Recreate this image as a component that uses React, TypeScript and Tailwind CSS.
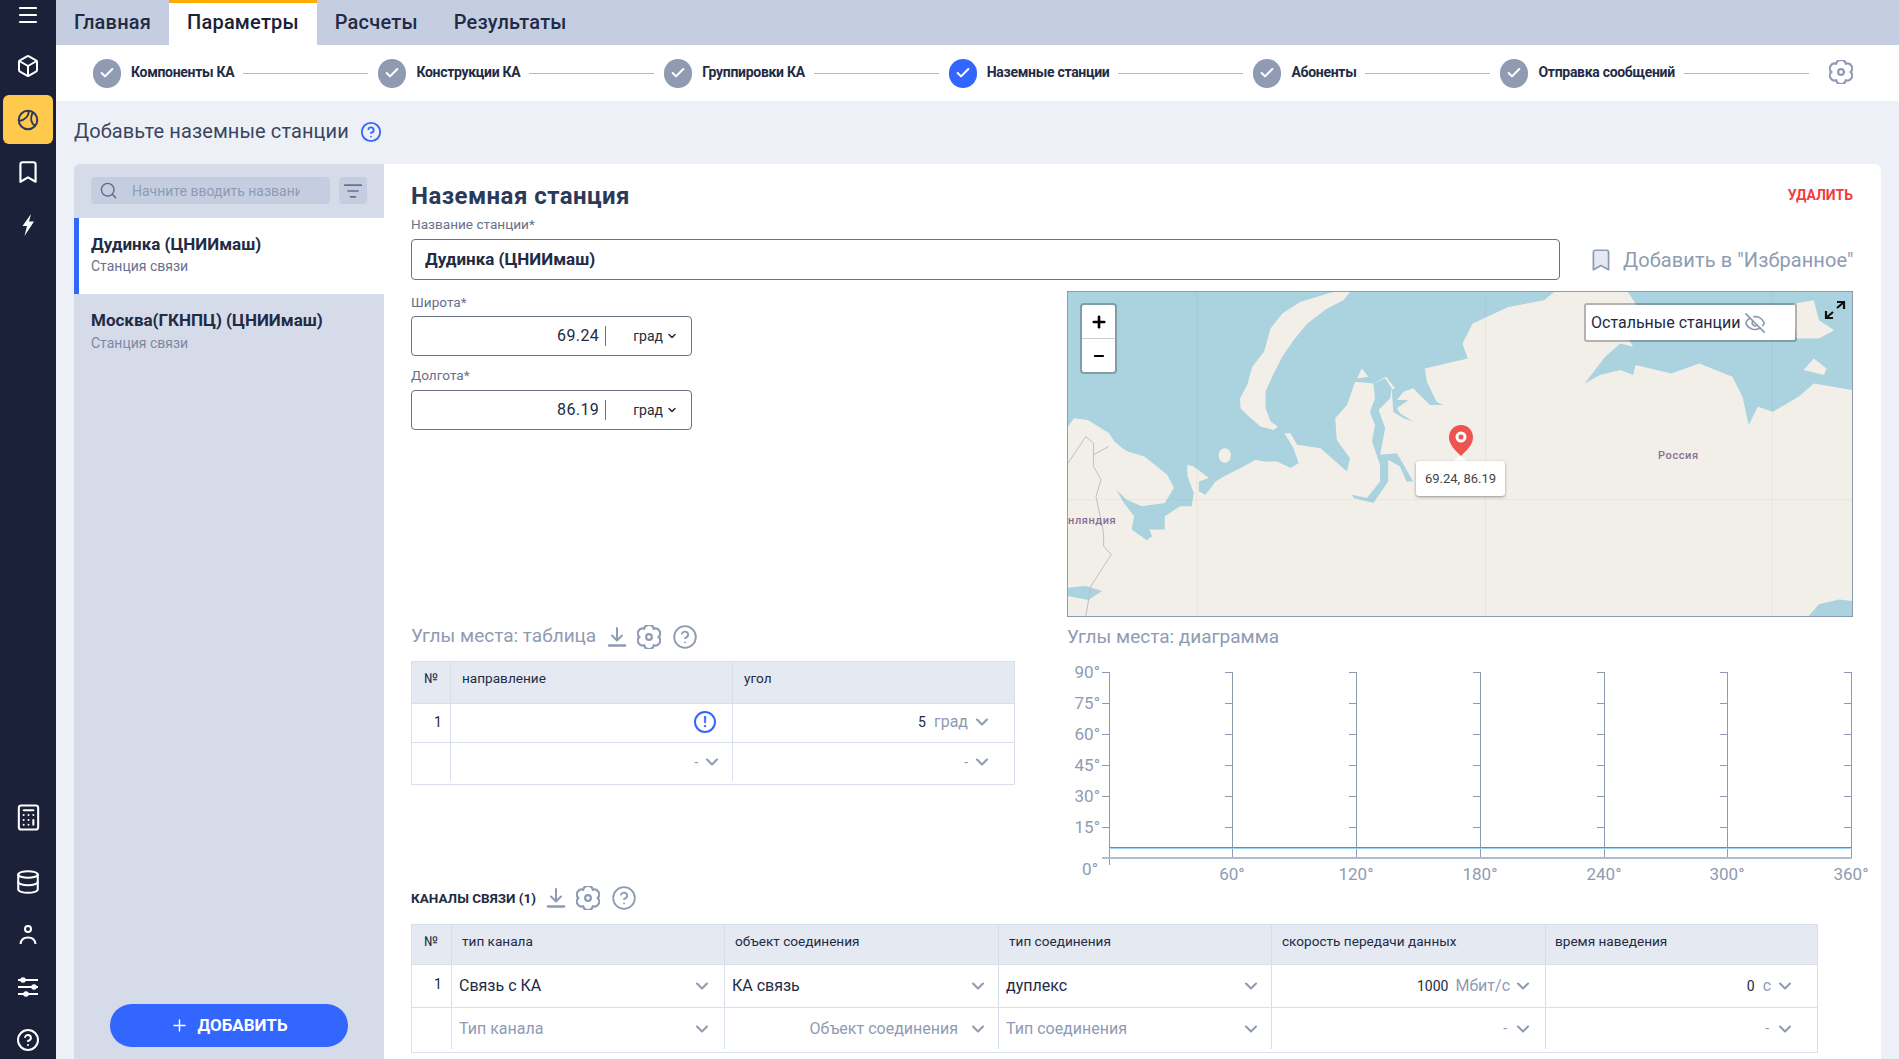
import { Bookmark, Box, Calculator, Check, ChevronDown, CircleHelp, Database, EyeOff, ListFilter, Menu, Minus, Plus, Search } from "lucide-react";

const steps = [
  { label: "Компоненты КА" },
  { label: "Конструкции КА" },
  { label: "Группировки КА" },
  { label: "Наземные станции", active: true },
  { label: "Абоненты" },
  { label: "Отправка сообщений" },
];

const ticksY = [672, 703, 734, 765, 796, 827, 858];
const labelsY = ["90°", "75°", "60°", "45°", "30°", "15°"];
const columnsX = [1232, 1356, 1480, 1604, 1727, 1851];
const labelsX = ["60°", "120°", "180°", "240°", "300°", "360°"];

function Gear({ size = 24, className = "" }: { size?: number; className?: string }) {
  return (
    <svg width={size} height={size} viewBox="2 2 20 20" fill="none" stroke="currentColor" strokeWidth="1.800" className={className}>
      <path d="M20 12A4.100 4.100 0 0 1 16 18.930A4.100 4.100 0 0 1 8 18.930A4.100 4.100 0 0 1 4 12A4.100 4.100 0 0 1 8 5.070A4.100 4.100 0 0 1 16 5.070A4.100 4.100 0 0 1 20 12Z" />
      <circle cx="12" cy="12" r="2.400" />
    </svg>
  );
}

function DownloadIcon() {
  return (
    <svg width="24" height="24" viewBox="0 0 24 24" fill="none" stroke="#8f9bb3" strokeWidth="2" strokeLinecap="round" strokeLinejoin="round">
      <path d="M12 3v12M7 10.500l5 5 5-5" />
      <path d="M4 20.500h16" strokeWidth="2.500" />
    </svg>
  );
}

function TableTools() {
  return (
    <div className="flex items-center text-[#8f9bb3]">
      <DownloadIcon />
      <Gear className="ml-2" />
      <CircleHelp size={26} strokeWidth={1.7} className="ml-[11px]" />
    </div>
  );
}

function Chevron() {
  return <ChevronDown size={20} strokeWidth={2.5} className="-mx-[2px] shrink-0 text-[#8f9bb3]" />;
}

function CoordInput({ value }: { value: string }) {
  return (
    <div className="mt-[6px] flex h-[40px] w-[281px] items-center rounded-[4px] border border-[#68708c] text-[#222b45]">
      <div className="flex-1 text-right text-[16px] tracking-[0.4px]">{value}</div>
      <div className="ml-[6px] h-[20px] w-px bg-[#68708c]" />
      <div className="ml-[27px] text-[14px]">град</div>
      <div className="ml-[3px] mr-[13px] text-[#222b45]">
        <ChevronDown size={12} strokeWidth={3} />
      </div>
    </div>
  );
}

function RussiaMap() {
  return (
    <svg className="absolute inset-0 h-full w-full" viewBox="15 35 1540 975" preserveAspectRatio="none">
      <rect x="15" y="35" width="1540" height="975" fill="#aad3df" />
      <path
        fill="#f2efe9"
        d="M15 440L27 415L54 420L96 460L106 485L122 505L132 515L165 530L210 585L223 625L205 670L160 680L130 660L110 630L125 670L145 710L140 750L170 782L180 770L175 750L205 750L205 710L235 680L258 680L262 640L250 590L249 555L262 560L292 595L272 605L272 635L285 645L305 605L321 590L360 560L383 540L400 545L426 545L452 565L468 550L458 505L440 460L452 460L465 495L511 505L563 575L569 535L543 480L540 415L563 375L579 305L615 310L640 290L655 320L675 330L695 320L716 265L800 235L790 190L810 130L880 80L950 60L970 35L1115 35L1130 70L1105 150L1125 200L1100 190L1070 230L1030 310L1060 285L1100 270L1125 285L1130 255L1200 280L1255 250L1320 290L1340 350L1352 435L1370 380L1400 395L1450 350L1480 310L1555 330L1555 1010L15 1010Z"
      />
      <path fill="#aad3df" d="M615 310L638 295L651 325L648 355L625 390L638 445L628 525L661 520L680 570L693 605L680 605L667 560L644 540L644 605L615 670L576 655L573 645L602 655L628 605L628 555L612 485L618 435L608 395L618 355Z" />
      <path fill="#aad3df" d="M716 265L720 305L739 365L752 375L726 375L693 325L674 335L661 360L684 360L661 385L667 400L693 425L674 415L654 395L651 330L660 320L700 290Z" />
      <path fill="#f2efe9" d="M569 35L556 60L524 85L485 130L458 180L436 230L419 280L403 335L403 385L413 425L427 440L419 450L393 440L367 405L354 385L353 355L367 315L377 260L400 215L413 145L436 100L471 65L524 40L537 35Z" />
      <path fill="#f2efe9" d="M583 295L592 265L605 290Z" />
      <ellipse cx="323" cy="527" rx="12" ry="22" fill="#f2efe9" />
      <path fill="#f2efe9" d="M1440 70L1480 60L1490 120L1520 150L1490 175L1445 175Z" />
      <path fill="#f2efe9" d="M1460 270L1480 235L1505 265L1500 285Z" />
      <path fill="#aad3df" d="M15 925L50 920L82 935L55 962L15 950Z" />
      <path fill="#aad3df" d="M1470 1010L1490 975L1530 960L1555 965L1555 1010Z" />
      <path d="M268 35V1010M835 35V1010M1398 35V1010M15 660H1555" stroke="#000" strokeOpacity="0.04" strokeWidth="1" vectorEffect="non-scaling-stroke" fill="none" />
      <path d="M15 550L50 470L65 490L65 560L80 600L70 650L85 760L85 800L100 825L60 920L50 1010M65 525L95 500" stroke="#c9b8c8" strokeWidth="1" vectorEffect="non-scaling-stroke" fill="none" />
    </svg>
  );
}

function MapPanel() {
  return (
    <div className="relative h-[326px] w-[786px] overflow-hidden border border-[#8f9bb3]">
      <RussiaMap />
      <div className="absolute left-[12px] top-[11px] w-[37px] rounded-[4px] border-2 border-[rgba(0,0,0,0.25)] bg-white bg-clip-padding text-black">
        <div className="flex h-[34px] items-center justify-center border-b border-[#ccc]">
          <Plus size={18} strokeWidth={3.5} />
        </div>
        <div className="flex h-[33px] items-center justify-center">
          <Minus size={14} strokeWidth={3.5} />
        </div>
      </div>
      <div className="absolute left-[516px] top-[11px] flex h-[39px] w-[213px] items-center rounded-[3px] border-2 border-[rgba(0,0,0,0.25)] bg-white bg-clip-padding pl-[5px] text-[16px] text-[#222b45]">
        Остальные станции
        <EyeOff size={22} strokeWidth={1.8} className="ml-[3px] text-[#8f9bb3]" />
      </div>
      <svg className="absolute left-[756px] top-[8px]" width="22" height="20" viewBox="0 0 22 20" fill="none" stroke="#111" strokeWidth="2.200">
        <path d="M13 2h7v7M20 2l-7 6M2 11v7h7M2 18l7-6" />
      </svg>
      <div className="absolute left-[387px] top-[165px] h-[10px] w-[10px] rotate-45 bg-white" />
      <svg className="absolute left-[381px] top-[133px]" width="24" height="31" viewBox="0 0 24 31">
        <path d="M12 0C5 0 0 5.500 0 12.500C0 20 7 26 12 31C17 26 24 20 24 12.500C24 5.500 19 0 12 0Z" fill="#ef5350" />
        <circle cx="12" cy="12" r="5.500" fill="#fff" />
        <circle cx="12" cy="12" r="2.500" fill="#ef5350" />
      </svg>
      <div className="absolute left-[348px] top-[169px] flex h-[35px] w-[89px] items-center justify-center rounded-[3px] bg-white text-[13px] text-[#444] shadow-[0_1px_3px_rgba(0,0,0,0.4)]">
        69.24, 86.19
      </div>
      <div className="absolute left-[590px] top-[156px] text-[11px] font-medium tracking-[0.6px] text-[#8a6d95]">Россия</div>
      <div className="absolute left-0 top-[221px] text-[11px] font-medium tracking-[0.6px] text-[#8a6d95]">нляндия</div>
    </div>
  );
}

function ElevationChart() {
  return (
    <svg className="block overflow-visible" width="786" height="222" viewBox="1067 661 786 222" fill="#8f9bb3" fontFamily="Roboto, sans-serif" fontSize="17">
      {[1109, ...columnsX].map((x) => (
        <g key={x}>
          <path d={`M${x + 0.5} 672V${x === 1109 ? 865 : 858}`} stroke="#8f9bb3" fill="none" />
          {ticksY.map((y) => (
            <path key={y} d={`M${x - 7} ${y + 0.5}H${x + 0.5}`} stroke="#8f9bb3" fill="none" />
          ))}
        </g>
      ))}
      <path d="M1102 858H1852" stroke="#b4bccb" strokeWidth="2" fill="none" />
      <path d="M1109 848H1852" stroke="#9fd2f5" strokeWidth="2" fill="none" />
      <path d="M1109 847.500H1852" stroke="#3f9be0" strokeWidth="1" fill="none" />
      {labelsY.map((label, i) => (
        <text key={label} x="1100" y={ticksY[i] + 6} textAnchor="end">
          {label}
        </text>
      ))}
      <text x="1098" y="875" textAnchor="end">
        0°
      </text>
      {labelsX.map((label, i) => (
        <text key={label} x={columnsX[i]} y="880" textAnchor="middle">
          {label}
        </text>
      ))}
    </svg>
  );
}

function AnglesTable() {
  return (
    <div className="w-[604px] border border-[#d8deea] text-[#222b45]">
      <div className="grid h-[41px] grid-cols-[38px_282px_1fr] bg-[#e4e9f2] text-[13.600px] leading-[16px]">
        <div className="pl-[12px] pt-[8px]">№</div>
        <div className="border-l border-[#d8deea] pl-[11px] pt-[8px]">направление</div>
        <div className="border-l border-[#d8deea] pl-[11px] pt-[8px]">угол</div>
      </div>
      <div className="grid h-[39px] grid-cols-[38px_282px_1fr] border-t border-[#d8deea]">
        <div className="pl-[22px] pt-[10px] text-[14px] leading-[16px]">1</div>
        <div className="flex items-center justify-end border-l border-[#d8deea] pb-[2px] pr-[16px]">
          <div className="flex h-[22px] w-[22px] items-center justify-center rounded-full border-2 border-[#3366ff] text-[14px] font-bold text-[#3366ff]">!</div>
        </div>
        <div className="flex items-center justify-end border-l border-[#d8deea] pb-[2px] pr-[24px]">
          <span className="text-[14px]">5</span>
          <span className="ml-[8px] text-[16px] text-[#8f9bb3]">град</span>
          <span className="ml-[6px]">
            <Chevron />
          </span>
        </div>
      </div>
      <div className="border-t border-[#d8deea] pb-[3px]">
        <div className="grid h-[38px] grid-cols-[38px_282px_1fr] text-[#8f9bb3]">
          <div />
          <div className="flex items-center justify-end gap-[6px] border-l border-[#d8deea] pr-[12px] text-[14px]">
            -
            <Chevron />
          </div>
          <div className="flex items-center justify-end gap-[6px] border-l border-[#d8deea] pr-[24px] text-[14px]">
            -
            <Chevron />
          </div>
        </div>
      </div>
    </div>
  );
}

const channelCols = "grid grid-cols-[39px_273px_274px_273px_274px_1fr]";

function ChannelsTable() {
  const head = ["тип канала", "объект соединения", "тип соединения", "скорость передачи данных", "время наведения"];
  return (
    <div className="w-[1407px] border border-[#d8deea] text-[#222b45]">
      <div className={`${channelCols} h-[39px] bg-[#e4e9f2] text-[13.600px] leading-[16px]`}>
        <div className="pl-[12px] pt-[8px]">№</div>
        {head.map((h, i) => (
          <div key={h} className={`border-l border-[#d8deea] pt-[8px] ${i === 4 ? "pl-[9px]" : "pl-[10px]"}`}>
            {h}
          </div>
        ))}
      </div>
      <div className={`${channelCols} h-[43px] border-t border-[#d8deea] text-[16px]`}>
        <div className="pl-[22px] pt-[11px] text-[14px] leading-[16px]">1</div>
        <div className="flex items-center justify-between border-l border-[#d8deea] pl-[7px] pr-[14px]">
          Связь с КА
          <Chevron />
        </div>
        <div className="flex items-center justify-between border-l border-[#d8deea] pl-[7px] pr-[12px]">
          КА связь
          <Chevron />
        </div>
        <div className="flex items-center justify-between border-l border-[#d8deea] pl-[7px] pr-[12px]">
          дуплекс
          <Chevron />
        </div>
        <div className="flex items-center justify-end border-l border-[#d8deea] pr-[14px]">
          <span className="text-[14px]">1000</span>
          <span className="ml-[7px] text-[#8f9bb3]">Мбит/с</span>
          <span className="ml-[5px]">
            <Chevron />
          </span>
        </div>
        <div className="flex items-center justify-end border-l border-[#d8deea] pr-[24px]">
          <span className="text-[14px]">0</span>
          <span className="ml-[8px] text-[#8f9bb3]">с</span>
          <span className="ml-[6px]">
            <Chevron />
          </span>
        </div>
      </div>
      <div className="border-t border-[#d8deea] pb-[3px]">
        <div className={`${channelCols} h-[41px] text-[16px] text-[#8f9bb3]`}>
          <div />
          <div className="flex items-center justify-between border-l border-[#d8deea] pl-[7px] pr-[14px]">
            Тип канала
            <Chevron />
          </div>
          <div className="flex items-center justify-end gap-[12px] border-l border-[#d8deea] pr-[12px]">
            Объект соединения
            <Chevron />
          </div>
          <div className="flex items-center justify-between border-l border-[#d8deea] pl-[7px] pr-[12px]">
            Тип соединения
            <Chevron />
          </div>
          <div className="flex items-center justify-end gap-[8px] border-l border-[#d8deea] pr-[14px] text-[14px]">
            -
            <Chevron />
          </div>
          <div className="flex items-center justify-end gap-[8px] border-l border-[#d8deea] pr-[24px] text-[14px]">
            -
            <Chevron />
          </div>
        </div>
      </div>
    </div>
  );
}

function Sidebar() {
  return (
    <aside className="flex w-[56px] shrink-0 flex-col items-center justify-between bg-[#1a2138] pb-[7px] text-white">
      <div className="flex flex-col items-center">
        <div className="flex h-[30px] items-center">
          <Menu size={24} strokeWidth={2.2} />
        </div>
        <Box size={24} strokeWidth={2} className="mt-[24px]" />
        <div className="mt-[17px] flex h-[49px] w-[50px] items-center justify-center rounded-[6px] bg-[#ffc94d] text-[#2c3a5a]">
          <svg width="24" height="24" viewBox="0 0 24 24" fill="none" stroke="currentColor" strokeWidth="2">
            <circle cx="12" cy="12" r="9.300" />
            <path d="M13 3C12.500 8 9.500 12 3 13" />
            <path d="M16.500 5C14 10 15 15 19 18" />
          </svg>
        </div>
        <Bookmark size={26} strokeWidth={2} className="mt-[15px]" />
        <svg className="mt-[27px]" width="24" height="24" viewBox="0 0 24 24" fill="#fff">
          <path d="M15 2L6.500 14H11L8.500 24L18 9.500H13Z" />
        </svg>
      </div>
      <div className="flex flex-col items-center">
        <Calculator size={29} strokeWidth={1.7} />
        <Database size={26} strokeWidth={1.9} className="mt-[37px]" />
        <svg className="mt-[28px]" width="24" height="24" viewBox="0 0 24 24" fill="none" stroke="#fff" strokeWidth="2">
          <circle cx="12" cy="6" r="3" />
          <path d="M4.500 21C5 16.500 8 14.500 12 14.500C16 14.500 19 16.500 19.500 21" />
        </svg>
        <svg className="mt-[28px]" width="24" height="24" viewBox="0 0 24 24" fill="#fff" stroke="#fff" strokeWidth="2">
          <path d="M2 5h20M2 12h20M2 19h20" />
          <circle cx="7" cy="5" r="1.800" />
          <circle cx="18" cy="12" r="1.800" />
          <circle cx="10" cy="19" r="1.800" />
        </svg>
        <CircleHelp size={24} strokeWidth={2} className="mt-[29px]" />
      </div>
    </aside>
  );
}

function StationList() {
  return (
    <div className="flex w-[310px] shrink-0 flex-col rounded-tl-[6px] bg-[#d5dbe9]">
      <div className="flex h-[54px] items-start pl-[17px] pt-[13px]">
        <div className="flex h-[27px] w-[239px] items-center rounded-[4px] bg-[#c5cee0] pl-[8px]">
          <Search size={19} strokeWidth={1.8} className="text-[#5d6b88]" />
          <input
            readOnly
            placeholder="Начните вводить название"
            className="ml-[14px] w-[168px] bg-transparent pt-[2px] text-[14px] outline-none placeholder:text-[#8f9bb3]"
          />
        </div>
        <div className="ml-[9px] flex h-[27px] w-[28px] items-center justify-center rounded-[4px] bg-[#c5cee0] text-[#68708c]">
          <ListFilter size={20} strokeWidth={2} />
        </div>
      </div>
      <div className="h-[76px] border-l-[5px] border-[#3366ff] bg-white pl-[12px] pt-[15px]">
        <div className="text-[17px] font-bold leading-[22px] text-[#222b45]">Дудинка (ЦНИИмаш)</div>
        <div className="text-[14px] leading-[23px] text-[#68708c]">Станция связи</div>
      </div>
      <div className="h-[76px] pl-[17px] pt-[15px]">
        <div className="text-[17px] font-bold leading-[22px] text-[#222b45]">Москва(ГКНПЦ) (ЦНИИмаш)</div>
        <div className="text-[14px] leading-[25px] text-[#7d88a3]">Станция связи</div>
      </div>
      <div className="mt-auto mb-[12px] ml-[36px] flex h-[43px] w-[238px] items-center justify-center rounded-full bg-[#3366ff] text-[17px] font-bold text-white">
        <Plus size={19} strokeWidth={1.8} className="mr-[8px]" />
        ДОБАВИТЬ
      </div>
    </div>
  );
}

export default function App() {
  return (
    <div className="flex h-[1059px] w-[1899px] overflow-hidden bg-[#edf1f7] font-['Roboto',sans-serif]">
      <Sidebar />
      <div className="flex min-w-0 flex-1 flex-col">
        {/* Tabs */}
        <nav className="flex h-[45px] shrink-0 bg-[#c5cee0] text-[20px] font-medium tracking-[0.2px] text-[#222b45]">
          <div className="flex items-center px-[18px] pb-[2px]">Главная</div>
          <div className="flex items-center border-t-[3px] border-[#ffaa00] bg-white px-[18px] pb-[5px] text-[#1a2138]">Параметры</div>
          <div className="flex items-center px-[18px] pb-[2px]">Расчеты</div>
          <div className="flex items-center px-[18px] pb-[2px]">Результаты</div>
        </nav>

        {/* Stepper */}
        <div className="flex h-[56px] shrink-0 items-center bg-white pl-[37px]">
          {steps.map((step) => (
            <div key={step.label} className="flex items-center">
              <div className={`flex h-[29px] w-[28px] items-center justify-center rounded-full ${step.active ? "bg-[#3366ff]" : "bg-[#8f9bb3]"}`}>
                <Check size={16} strokeWidth={3} className="text-white" />
              </div>
              <span className="ml-[10px] whitespace-nowrap pb-[2px] text-[14px] font-bold tracking-[-0.3px] text-[#222b45]">{step.label}</span>
              <div className="ml-[9px] mr-[10px] h-px w-[125px] bg-[#b8b8b8]" />
            </div>
          ))}
          <Gear size={24} className="mb-[2px] ml-[10px] text-[#8f9bb3]" />
        </div>

        {/* Title */}
        <div className="flex h-[60px] shrink-0 items-center pl-[18px] text-[20px] tracking-[0.1px] text-[#3b4560]">
          Добавьте наземные станции
          <CircleHelp size={22} strokeWidth={2} className="ml-[11px] mt-[2px] text-[#3366ff]" />
        </div>

        <main className="mx-[18px] mt-[3px] flex min-h-0 flex-1">
          <StationList />
          <section className="min-w-0 flex-1 rounded-tr-[6px] bg-white pl-[27px] pr-[28px]">
            <div className="mt-[17px] flex h-[30px] items-center justify-between">
              <h1 className="text-[24px] font-bold tracking-[0.45px] text-[#2c3a5a]">Наземная станция</h1>
              <span className="pb-[2px] text-[14px] font-bold text-[#f23c3c]">УДАЛИТЬ</span>
            </div>
            <div className="mt-[6px] h-[14px] text-[13.600px] leading-[14px] text-[#68708c]">Название станции*</div>
            <div className="mt-[8px] flex items-center">
              <div className="flex h-[41px] w-[1149px] shrink-0 items-center rounded-[4px] border border-[#68708c] pl-[13px] text-[17px] font-bold text-[#222b45]">
                Дудинка (ЦНИИмаш)
              </div>
              <Bookmark size={26} strokeWidth={1.6} className="ml-[28px] shrink-0 fill-[#e4e9f2] text-[#8f9bb3]" />
              <span className="ml-[9px] whitespace-nowrap text-[20px] tracking-[0.1px] text-[#8f9bb3]">Добавить в "Избранное"</span>
            </div>

            <div className="mt-[11px] flex">
              <div className="w-[656px] pt-[3px]">
                <div className="text-[13.600px] leading-[16px] text-[#68708c]">Широта*</div>
                <CoordInput value="69.24" />
                <div className="mt-[11px] pb-[1px] text-[13.600px] leading-[16px] text-[#68708c]">Долгота*</div>
                <CoordInput value="86.19" />
              </div>
              <MapPanel />
            </div>

            <div className="flex">
              <div className="w-[656px]">
                <div className="mb-[4px] flex h-[39px] items-center gap-[9px]">
                  <span className="text-[19px] text-[#8f9bb3]">Углы места: таблица</span>
                  <TableTools />
                </div>
                <div className="pt-[1px]">
                  <AnglesTable />
                </div>
              </div>
              <div className="w-[786px]">
                <div className="mb-[4px] flex h-[40px] items-center text-[19px] text-[#8f9bb3]">Углы места: диаграмма</div>
                <ElevationChart />
              </div>
            </div>

            <div className="mb-[11px] flex h-[30px] items-center gap-[8px]">
              <span className="text-[13.500px] font-bold text-[#222b45]">КАНАЛЫ СВЯЗИ (1)</span>
              <TableTools />
            </div>
            <ChannelsTable />
          </section>
        </main>
      </div>
    </div>
  );
}
